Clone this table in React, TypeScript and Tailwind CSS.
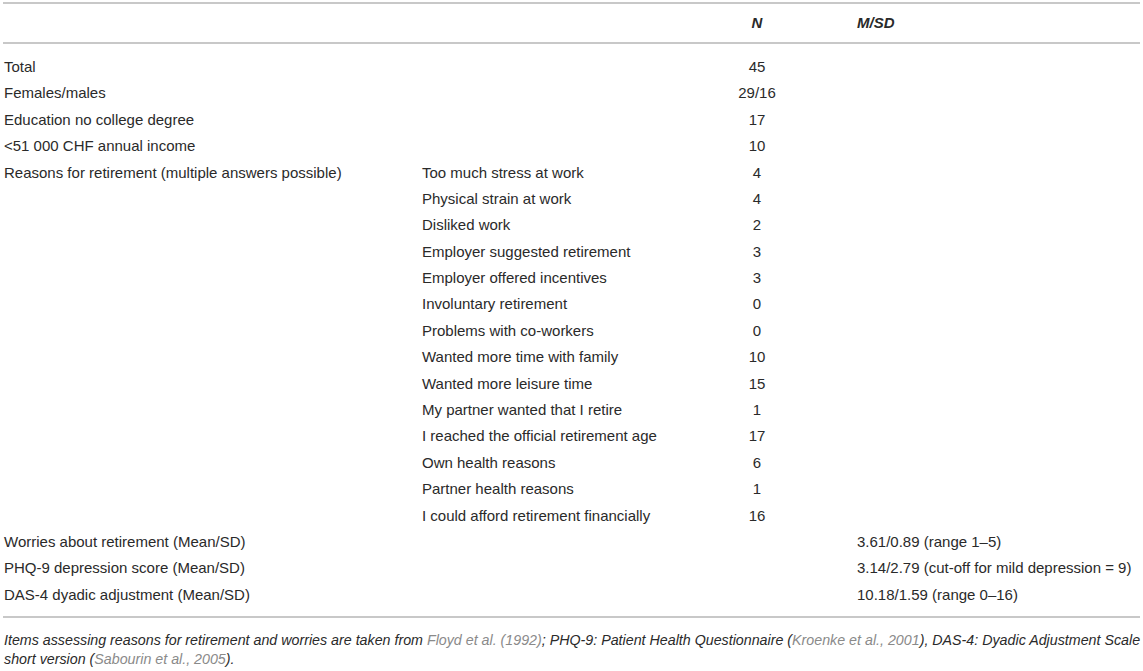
import React from 'react';

type Row = { label?: string; sub?: string; n?: string; msd?: string };

const rows: Row[] = [
  { label: 'Total', n: '45' },
  { label: 'Females/males', n: '29/16' },
  { label: 'Education no college degree', n: '17' },
  { label: '<51 000 CHF annual income', n: '10' },
  { label: 'Reasons for retirement (multiple answers possible)', sub: 'Too much stress at work', n: '4' },
  { sub: 'Physical strain at work', n: '4' },
  { sub: 'Disliked work', n: '2' },
  { sub: 'Employer suggested retirement', n: '3' },
  { sub: 'Employer offered incentives', n: '3' },
  { sub: 'Involuntary retirement', n: '0' },
  { sub: 'Problems with co-workers', n: '0' },
  { sub: 'Wanted more time with family', n: '10' },
  { sub: 'Wanted more leisure time', n: '15' },
  { sub: 'My partner wanted that I retire', n: '1' },
  { sub: 'I reached the official retirement age', n: '17' },
  { sub: 'Own health reasons', n: '6' },
  { sub: 'Partner health reasons', n: '1' },
  { sub: 'I could afford retirement financially', n: '16' },
  { label: 'Worries about retirement (Mean/SD)', msd: '3.61/0.89 (range 1–5)' },
  { label: 'PHQ-9 depression score (Mean/SD)', msd: '3.14/2.79 (cut-off for mild depression = 9)' },
  { label: 'DAS-4 dyadic adjustment (Mean/SD)', msd: '10.18/1.59 (range 0–16)' },
];

const Cite = ({ children }: { children: React.ReactNode }) => (
  <span className="text-[#8a8a8a]">{children}</span>
);

export default function App() {
  return (
    <div className="w-[1143px] h-[671px] bg-white text-[#2a2a2a] font-['Liberation_Sans',Arial,sans-serif] overflow-hidden">
      <div className="pt-[2px] pl-[3px] pr-[3px]">
        {/* header */}
        <div className="grid grid-cols-[419px_290px_90px_1fr] h-[42px] items-center border-t-2 border-b-2 border-[#c8c8c8] text-[15px]">
          <div />
          <div />
          <div className="text-center font-bold italic">N</div>
          <div className="pl-[55px] font-bold italic">M/SD</div>
        </div>

        {/* body */}
        <div className="pt-[10px] pb-[8px] border-b-2 border-[#c8c8c8] text-[15px]">
          {rows.map((r, i) => (
            <div key={i} className="grid grid-cols-[419px_290px_90px_1fr] h-[26.4px] items-center whitespace-nowrap">
              <div className="pl-[1px]">{r.label}</div>
              <div>{r.sub}</div>
              <div className="text-center">{r.n}</div>
              <div className="pl-[55px]">{r.msd}</div>
            </div>
          ))}
        </div>

        {/* footnote */}
        <p className="pt-[13px] pl-[1px] text-[14.25px] leading-[19px] italic whitespace-nowrap">
          Items assessing reasons for retirement and worries are taken from <Cite>Floyd et al. (1992)</Cite>; PHQ-9: Patient Health Questionnaire (<Cite>Kroenke et al., 2001</Cite>), DAS-4: Dyadic Adjustment Scale
          <br />
          short version (<Cite>Sabourin et al., 2005</Cite>).
        </p>
      </div>
    </div>
  );
}
